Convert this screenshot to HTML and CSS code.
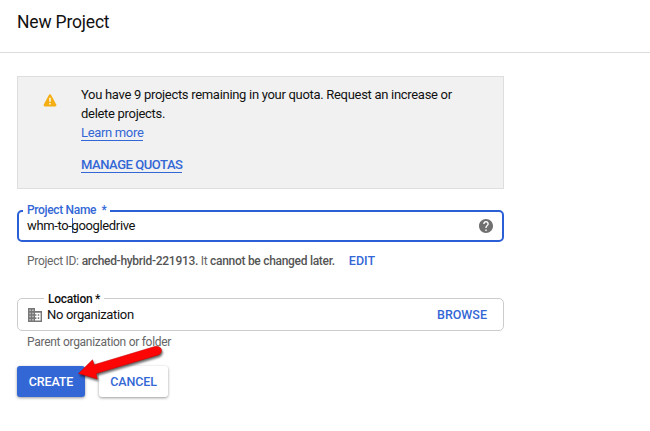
FILE: index.html
```html
<!DOCTYPE html>
<html lang="en">
<head>
<meta charset="utf-8">
<title>New Project</title>
<link rel="stylesheet" href="styles.css">
</head>
<body>
<header class="header"><h1 class="title">New Project</h1></header>
<main class="content">
  <section class="notice">
    <svg class="warn" viewBox="0 0 14 13"><path d="M7 1.700 12.100 11.100H1.900Z" fill="#f5ae13" stroke="#f5ae13" stroke-width="2.600" stroke-linejoin="round"/><path d="M7 3.800v4M7 9v1.500" stroke="#fff" stroke-width="1.400"/></svg>
    <div class="notice-body">
      <p class="message">You have 9 projects remaining in your quota. Request an increase or<br>delete projects.</p>
      <a class="link learn">Learn more</a>
      <a class="link manage">MANAGE QUOTAS</a>
    </div>
  </section>
  <div class="field name-field">
    <span class="label">Project Name&nbsp; *</span>
    <span class="value"><span>whm-to-</span><span class="caret"></span><span>googledrive</span></span>
    <svg class="help" viewBox="2 2 20 20"><path fill="#707070" d="M12 2C6.48 2 2 6.48 2 12s4.480 10 10 10 10-4.480 10-10S17.520 2 12 2zm1 17h-2v-2h2v2zm2.070-7.750l-.9.920C13.450 12.900 13 13.500 13 15h-2v-.5c0-1.100.45-2.100 1.170-2.830l1.240-1.260c.37-.36.590-.86.590-1.410 0-1.100-.9-2-2-2s-2 .9-2 2H8c0-2.210 1.790-4 4-4s4 1.790 4 4c0 .88-.36 1.680-.93 2.250z"/></svg>
  </div>
  <p class="project-id"><span class="id-prefix">Project ID:</span><span class="id-rest"><b>arched-hybrid-221913.</b> It <b>cannot be changed later.</b></span><a class="edit">EDIT</a></p>
  <div class="field location-field">
    <span class="label">Location *</span>
    <svg class="building" viewBox="2 3 20 18" preserveAspectRatio="none"><path fill="#777" d="M12 7V3H2v18h20V7H12zM6 19H4v-2h2v2zm0-4H4v-2h2v2zm0-4H4V9h2v2zm0-4H4V5h2v2zm4 12H8v-2h2v2zm0-4H8v-2h2v2zm0-4H8V9h2v2zm0-4H8V5h2v2zm10 12h-8v-2h2v-2h-2v-2h2v-2h-2V9h8v10zm-2-8h-2v2h2v-2zm0 4h-2v2h2v-2z"/><path d="M2 3h10v18H2z" fill="#777" opacity=".4"/></svg>
    <span class="org">No organization</span>
    <a class="browse">BROWSE</a>
  </div>
  <p class="hint">Parent organization or folder</p>
  <div class="actions">
    <button class="btn create">CREATE</button>
    <button class="btn cancel">CANCEL</button>
  </div>
</main>
<svg class="arrow" viewBox="70 338 100 50"><path d="M78.500 373.500 92.500 359.800 94.200 364.700 155.500 346.300Q160.500 346 161.500 350 161.600 354 157.500 355.200L96.200 373.500 97.300 379Z" fill="#fb0505" stroke="#c00000" stroke-width=".5"/></svg>
</body>
</html>
```

FILE: styles.css
```css
* { box-sizing: border-box; }
body { margin: 0; height: 431px; overflow: hidden; background: #fff; color: #111; font: 13px/19px Roboto, sans-serif; letter-spacing: -.3px; }
p, h1 { margin: 0; }
.header { height: 53px; border-bottom: 1px solid #dcdcdc; padding: 10px 17px; }
.title { font-size: 17.5px; line-height: 24px; font-weight: 400; letter-spacing: -.18px; }
.content { width: 504px; padding: 23px 0 0 17px; }
.notice { display: flex; height: 113px; border: 1px solid #dedede; background: #f1f1f1; padding: 8px 0 0 25px; }
.warn { width: 14px; height: 13px; margin: 9px 24px 0 0; }
.notice-body { display: flex; flex-direction: column; align-items: flex-start; white-space: nowrap; }
.link { color: #3367d6; border-bottom: 1px solid #3367d6; line-height: 15px; }
.learn { margin-top: 2px; letter-spacing: -.33px; }
.manage { margin-top: 16px; font-weight: 500; letter-spacing: -.45px; }
.field { position: relative; display: flex; align-items: center; border-radius: 5px; }
.label { position: absolute; padding: 0 4px; background: #fff; font-size: 12px; line-height: 16px; font-weight: 500; white-space: nowrap; letter-spacing: -.33px; }
.name-field { height: 32px; margin-top: 21px; border: 2px solid #2a5fd5; padding: 0 9px 0 8px; }
.name-field .label { left: 4px; top: -10px; height: 12px; color: #3367d6; }
.value { display: flex; align-items: center; flex: 1; margin-top: -2px; letter-spacing: -.36px; }
.caret { width: 1px; height: 15px; margin-right: -1px; background: #3367d6; }
.help { width: 14px; height: 14px; }
.project-id { display: flex; margin: 10px 0 0 10px; font-size: 12px; color: #666; white-space: nowrap; letter-spacing: -.29px; }
.id-prefix { margin-right: 3px; }
.project-id b { font-weight: 500; color: #555; }
.edit { margin: -1px 0 0 14px; color: #3367d6; font-size: 12.5px; font-weight: 500; letter-spacing: 0; }
.location-field { height: 33px; margin-top: 27px; border: 1px solid #ccc; padding: 0 16px 0 10px; }
.location-field .label { left: 26px; top: -8px; height: 12px; letter-spacing: -.28px; }
.building { width: 14px; height: 14px; margin-right: 5px; }
.org { flex: 1; letter-spacing: -.34px; }
.browse { margin-top: -1px; color: #3367d6; font-size: 12.5px; font-weight: 500; letter-spacing: 0; }
.hint { margin: 2px 0 0 10px; font-size: 12px; color: #666; letter-spacing: -.28px; }
.actions { display: flex; gap: 14px; margin-top: 14px; }
.btn { height: 31px; border: 0; border-radius: 3px; padding: 0; font: 500 12.5px Roboto, sans-serif; letter-spacing: -.1px; box-shadow: 0 1px 3px #0006; }
.create { width: 68px; color: #fff; background: #3367d6; }
.cancel { width: 69px; color: #3367d6; background: #fff; }
.arrow { position: absolute; left: 70px; top: 338px; width: 100px; height: 50px; filter: drop-shadow(1px 2px 1px #0009); }
```
